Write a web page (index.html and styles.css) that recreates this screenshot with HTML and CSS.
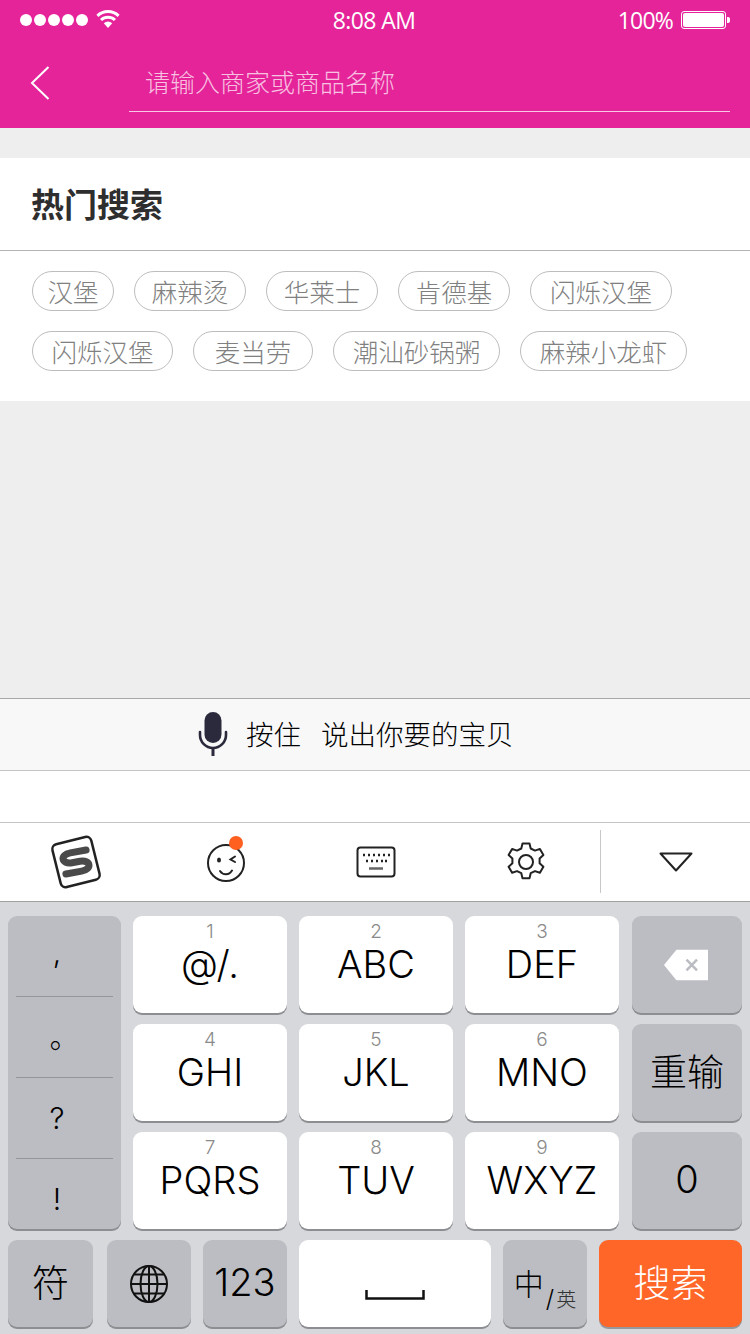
FILE: index.html
```html
<!DOCTYPE html>
<html lang="zh">
<head>
<meta charset="utf-8">
<title>搜索</title>
<link rel="stylesheet" href="styles.css">
</head>
<body>
<div class="app">
  <header class="header">
    <div class="status">
      <div class="status-left">
        <span class="dots"><i></i><i></i><i></i><i></i><i></i></span>
        <svg class="wifi" viewBox="0 0 24 18" width="24" height="18"><path d="M12 18 7.800 13.200a6 6 0 0 1 8.400 0Z" fill="#fff"/><path d="M5 10a10 10 0 0 1 14 0" fill="none" stroke="#fff" stroke-width="3"/><path d="M1.400 5.800a15.500 15.500 0 0 1 21.200 0" fill="none" stroke="#fff" stroke-width="3"/></svg>
      </div>
      <div class="status-time">8:08 AM</div>
      <div class="status-right">
        <span class="pct">100%</span>
        <span class="battery"><b></b></span><span class="battery-tip"></span>
      </div>
    </div>
    <div class="nav">
      <svg class="back" viewBox="0 0 20 36" width="20" height="36"><path d="M18.500 2 2 18l16.500 16" fill="none" stroke="#fff" stroke-width="2"/></svg>
      <div class="search">请输入商家或商品名称</div>
    </div>
  </header>

  <main class="content">
    <section class="hot">
      <h2 class="hot-title">热门搜索</h2>
      <div class="tags">
        <div class="tag-row">
          <span class="tag w82">汉堡</span><span class="tag w112">麻辣烫</span><span class="tag w112">华莱士</span><span class="tag w112">肯德基</span><span class="tag w142">闪烁汉堡</span>
        </div>
        <div class="tag-row">
          <span class="tag w141">闪烁汉堡</span><span class="tag w120">麦当劳</span><span class="tag w167">潮汕砂锅粥</span><span class="tag w167">麻辣小龙虾</span>
        </div>
      </div>
    </section>
  </main>

  <div class="voice">
    <svg class="mic" viewBox="0 0 30 44" width="30" height="44"><rect x="6.500" y="0" width="17" height="31" rx="8.500" fill="#2a2a3c"/><path d="M2 20v3a13 13 0 0 0 26 0v-3" fill="none" stroke="#2a2a3c" stroke-width="2.600" stroke-linecap="round"/><path d="M15 36v8" stroke="#2a2a3c" stroke-width="3"/></svg>
    <span class="voice-a">按住</span><span class="voice-b">说出你要的宝贝</span>
  </div>
  <div class="blank"></div>

  <div class="toolbar">
    <div class="tool">
      <svg viewBox="0 0 56 56" width="56" height="56"><rect x="8" y="6" width="40" height="44" rx="5" transform="rotate(-14 28 28)" fill="#fff" stroke="#222" stroke-width="2.500"/><path d="M40 18H24C13 18 13 28 24 28H32C43 28 43 38 32 38H16" fill="none" stroke="#4a4a4a" stroke-width="7" stroke-linecap="round" transform="rotate(-10 28 28)"/></svg>
    </div>
    <div class="tool">
      <svg viewBox="0 0 44 52" width="44" height="52"><circle cx="21" cy="29" r="18" fill="#fff" stroke="#222" stroke-width="2"/><ellipse cx="14" cy="26" rx="2" ry="2.600" fill="#222"/><path d="M30 22.500 25.500 25.500l4.500 2.500" fill="none" stroke="#222" stroke-width="2" stroke-linecap="round"/><path d="M15 37c3 4.500 9 4.500 12-.5" fill="none" stroke="#222" stroke-width="2" stroke-linecap="round"/><circle cx="31" cy="9" r="7" fill="#ff5f1f"/></svg>
    </div>
    <div class="tool">
      <svg viewBox="0 0 40 32" width="40" height="32"><rect x="1.500" y="1.500" width="37" height="29" rx="3" fill="#fff" stroke="#222" stroke-width="2"/><path d="M7 9h2M12 9h2M17 9h2M22 9h2M27 9h2M32 9h2M10 15h2M15 15h2M20 15h2M25 15h2M29 15h2" stroke="#222" stroke-width="2.500"/><path d="M13 22.500h14" stroke="#666" stroke-width="2.500"/></svg>
    </div>
    <div class="tool">
      <svg viewBox="0 0 40 40" width="40" height="40"><path d="M16.500 1.500h7l1.200 5 4.300 2.100 4.900-1.700 3.500 6-3.800 3.500v4.900l3.800 3.500-3.500 6-4.900-1.700-4.300 2.100-1.200 5h-7l-1.200-5-4.300-2.100-4.900 1.700-3.500-6 3.800-3.500v-4.900l-3.800-3.500 3.500-6 4.900 1.700 4.300-2.100Z" fill="none" stroke="#222" stroke-width="2" stroke-linejoin="round"/><circle cx="20" cy="20" r="7" fill="none" stroke="#222" stroke-width="2"/></svg>
    </div>
    <div class="tool tool-last">
      <svg viewBox="0 0 36 22" width="36" height="22"><path d="M2.500 2.500h31L18 19.500Z" fill="none" stroke="#222" stroke-width="2" stroke-linejoin="round"/></svg>
    </div>
  </div>

  <div class="keyboard">
    <div class="key-grid">
      <div class="key gray punct">
        <span class="p-comma">,</span><span class="p-ring">。</span><span>?</span><span>!</span>
      </div>
      <div class="key white"><small>1</small><em>@/.</em></div>
      <div class="key white"><small>2</small><em>ABC</em></div>
      <div class="key white"><small>3</small><em>DEF</em></div>
      <div class="key gray center">
        <svg class="bksp" viewBox="0 0 46 32" width="44" height="32"><path d="M13 0h33v32H13L0 16Z" fill="#fff"/><path d="M23.500 10.500l11 11M34.500 10.500l-11 11" stroke="#bbbcc1" stroke-width="2.600"/></svg>
      </div>
      <div class="key white"><small>4</small><em>GHI</em></div>
      <div class="key white"><small>5</small><em>JKL</em></div>
      <div class="key white"><small>6</small><em>MNO</em></div>
      <div class="key gray center big">重输</div>
      <div class="key white"><small>7</small><em>PQRS</em></div>
      <div class="key white"><small>8</small><em>TUV</em></div>
      <div class="key white"><small>9</small><em>WXYZ</em></div>
      <div class="key gray center latin">0</div>
    </div>
    <div class="key-bottom">
      <div class="key gray center big k85">符</div>
      <div class="key gray center k84">
        <svg viewBox="0 0 40 40" width="40" height="40"><g fill="none" stroke="#111" stroke-width="2"><circle cx="20" cy="20" r="18"/><ellipse cx="20" cy="20" rx="8.500" ry="18"/><path d="M20 2v36M2 20h36M5 10.500h30M5 29.500h30"/></g></svg>
      </div>
      <div class="key gray center latin k84">123</div>
      <div class="key white center k192">
        <svg class="space" viewBox="0 0 60 12" width="60" height="12"><path d="M1.500 1v8.500h57V1" fill="none" stroke="#111" stroke-width="2.500"/></svg>
      </div>
      <div class="key gray center k84 zh"><span class="zh-a">中</span><span class="zh-b">/</span><span class="zh-c">英</span></div>
      <div class="key orange center big k143">搜索</div>
    </div>
  </div>
</div>
</body>
</html>
```
FILE: styles.css
```css
* { box-sizing: border-box; margin: 0; padding: 0; }
html, body { width: 750px; height: 1334px; overflow: hidden; }
body { font-family: "Noto Sans CJK SC", "Noto Sans", sans-serif; font-weight: 300; background: #eeeeee; }
.app { width: 750px; height: 1334px; display: flex; flex-direction: column; }

.header { height: 128px; background: #e5249a; color: #fff; flex: none; }
.status { height: 40px; display: flex; align-items: center; justify-content: space-between; padding: 0 20px; position: relative; }
.status-left { display: flex; align-items: center; gap: 8px; }
.dots { display: flex; gap: 2px; }
.dots i { width: 12px; height: 12px; border-radius: 50%; background: #fff; display: block; }
.wifi { margin-top: -2px; }
.status-time { position: absolute; left: 0; right: 2px; text-align: center; font: 23px "Open Sans", sans-serif; letter-spacing: -.6px; }
.status-right { display: flex; align-items: center; font: 23px "Open Sans", sans-serif; letter-spacing: -.8px; }
.pct { margin-right: 8px; }
.battery { width: 45px; height: 18px; border: 1px solid #fff; border-radius: 3px; padding: 1px; display: block; }
.battery b { display: block; height: 100%; background: #fff; border-radius: 2px; }
.battery-tip { width: 3px; height: 6px; background: #fff; border-radius: 0 2px 2px 0; margin-left: 1px; }

.nav { height: 88px; display: flex; align-items: flex-start; padding: 0 20px 0 30px; }
.back { margin-top: 25px; flex: none; }
.search { margin-left: 79px; flex: 1; height: 72px; border-bottom: 1px solid rgba(255,255,255,.75); padding: 19px 0 0 16px; font-size: 25px; line-height: 44px; color: rgba(255,255,255,.72); }

.content { flex: 1; padding-top: 30px; background: #eeeeee; }
.hot { background: #fff; height: 243px; }
.hot-title { height: 93px; border-bottom: 1px solid #b4b4b4; padding-left: 31px; font-size: 33px; line-height: 90px; font-weight: 700; color: #2e2e2e; }
.tags { padding: 20px 0 0 32px; display: flex; flex-direction: column; gap: 20px; }
.tag-row { display: flex; gap: 20px; }
.tag { height: 40px; border: 1px solid #bdbdbd; border-radius: 20px; font-size: 25.500px; line-height: 38px; color: #808080; text-align: center; white-space: nowrap; }
.w82 { width: 82px; } .w112 { width: 112px; } .w120 { width: 120px; } .w141 { width: 141px; } .w142 { width: 142px; } .w167 { width: 167px; }

.voice { height: 73px; flex: none; background: #f8f8f8; border-top: 1px solid #a8a8a8; border-bottom: 1px solid #c4c4c4; display: flex; align-items: center; padding-left: 198px; font-size: 27.500px; color: #000; }
.mic { margin-right: 18px; margin-bottom: 2px; }
.voice-a { margin-right: 20px; margin-bottom: 3px; }
.voice-b { margin-bottom: 3px; }
.blank { height: 51px; flex: none; background: #fff; }

.toolbar { height: 80px; flex: none; background: #fff; border-top: 1px solid #c4c4c4; border-bottom: 1px solid #a0a0a0; display: grid; grid-template-columns: repeat(5, 150px); }
.tool { display: flex; align-items: center; justify-content: center; padding: 0 0 0 2px; }
.tool:nth-child(2) { padding: 0 0 4px 3px; }
.tool-last { position: relative; }
.tool-last::before { content: ""; position: absolute; left: 0; top: 7px; bottom: 8px; border-left: 1px solid #c8c8c8; }

.keyboard { height: 432px; flex: none; background: #d6d8dc; padding: 14px 8px 0; }
.key-grid { display: grid; grid-template-columns: 113px 154px 154px 154px 111px; grid-template-rows: repeat(3, 97px); column-gap: 12px; row-gap: 11px; }
.key-grid > .center { margin-left: 1px; }
.key { border-radius: 9px; box-shadow: 0 2px 0 #8d8e92; display: flex; flex-direction: column; align-items: center; color: #000; }
.gray { background: #bcbdc2; }
.white { background: #fff; }
.orange { background: #ff6628; color: #fff; box-shadow: 0 2px 0 #98989c; }
.center { justify-content: center; flex-direction: row; align-items: center; }
.bksp { margin-right: 2px; }
.white small { font: 300 19px/20px Inter, sans-serif; color: #8a8a8a; margin-top: 6px; }
.white em { font: 300 38px/46px Inter, sans-serif; font-style: normal; color: #000; margin-top: -1px; }
.big { font-size: 37px; padding-bottom: 6px; }
.latin { font: 300 38px Inter, sans-serif; padding-bottom: 4px; }
.punct { grid-row: 1 / span 3; padding: 0 8px; overflow: hidden; font: 300 30px/80px Inter, "Noto Sans CJK SC", sans-serif; }
.punct span { flex: none; width: 100%; height: 81px; padding-right: 15px; text-align: center; border-bottom: 1px solid #94959a; }
.punct .p-ring { padding-right: 0; }
.punct .p-comma { line-height: 72px; }
.punct span:last-child { border-bottom: 0; }

.key-bottom { display: flex; margin-top: 11px; height: 87px; }
.key-bottom .key { height: 87px; margin-right: 12px; }
.key-bottom .key:last-child { margin-right: 0; }
.k85 { width: 85px; margin-right: 14px !important; }
.k84 { width: 84px; }
.k192 { width: 192px; }
.k143 { width: 143px; }
.space { margin-top: 22px; }
.zh { align-items: flex-start; justify-content: center; }
.zh-a { font-size: 30px; line-height: 40px; margin-top: 22px; }
.zh-b { font: 300 24px/28px Inter, sans-serif; margin: 45px 2px 0; }
.zh-c { font-size: 20px; line-height: 28px; margin-top: 45px; color: #333; }
```
